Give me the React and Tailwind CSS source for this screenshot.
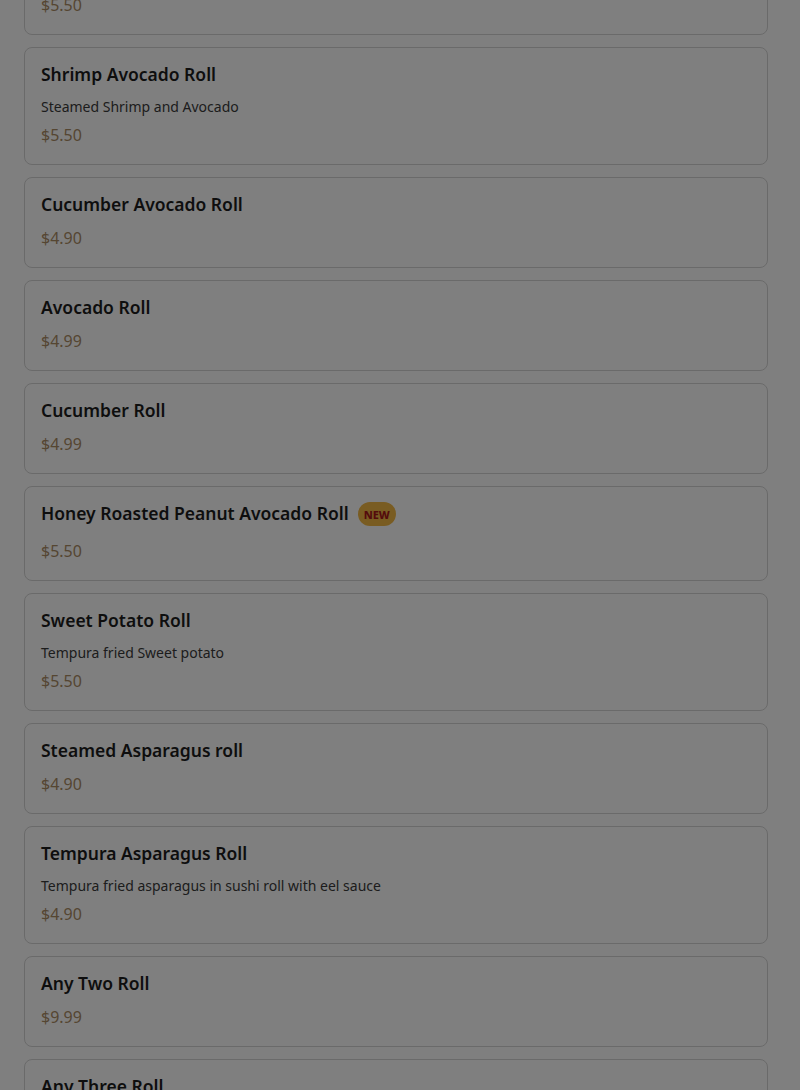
const items = [
  { name: 'Salmon Avocado Roll', desc: 'Fresh Salmon and Avocado', price: '$5.50' },
  { name: 'Shrimp Avocado Roll', desc: 'Steamed Shrimp and Avocado', price: '$5.50' },
  { name: 'Cucumber Avocado Roll', price: '$4.90' },
  { name: 'Avocado Roll', price: '$4.99' },
  { name: 'Cucumber Roll', price: '$4.99' },
  { name: 'Honey Roasted Peanut Avocado Roll', price: '$5.50', isNew: true },
  { name: 'Sweet Potato Roll', desc: 'Tempura fried Sweet potato', price: '$5.50' },
  { name: 'Steamed Asparagus roll', price: '$4.90' },
  { name: 'Tempura Asparagus Roll', desc: 'Tempura fried asparagus in sushi roll with eel sauce', price: '$4.90' },
  { name: 'Any Two Roll', price: '$9.99' },
  { name: 'Any Three Roll', price: '$13.99' },
];

function MenuCard({ item }) {
  return (
    <div className="bg-white border border-[#d4d4d4] rounded-lg px-4 pt-[14px] pb-[18px]">
      <div className="flex items-start gap-[9px]">
        <h3 className="text-[17.5px] leading-[24px] font-semibold text-[#1c1c1c]">{item.name}</h3>
        {item.isNew && (
          <span className="mt-[1px] h-[24px] flex items-center bg-[#f2b844] text-[#a8161a] text-[11px] font-extrabold leading-none px-[6px] rounded-full">NEW</span>
        )}
      </div>
      {item.desc && (
        <p className="text-[14px] leading-[20px] text-[#3a3a3a] mt-[11px]">{item.desc}</p>
      )}
      <div className={`text-[16px] leading-[22px] text-[#ab8c64] ${item.desc ? 'mt-[7px]' : item.isNew ? 'mt-[14px]' : 'mt-[11px]'}`}>{item.price}</div>
    </div>
  );
}

export default function App() {
  return (
    <div className="relative h-[1090px] overflow-hidden bg-white" style={{ fontFamily: '"Noto Sans", Lato, sans-serif' }}>
      <div className="pl-6 pr-8 flex flex-col gap-3 -mt-[83px]">
        {items.map(it => <MenuCard key={it.name} item={it} />)}
      </div>
      <div className="absolute inset-0 bg-black/50" />
    </div>
  );
}
